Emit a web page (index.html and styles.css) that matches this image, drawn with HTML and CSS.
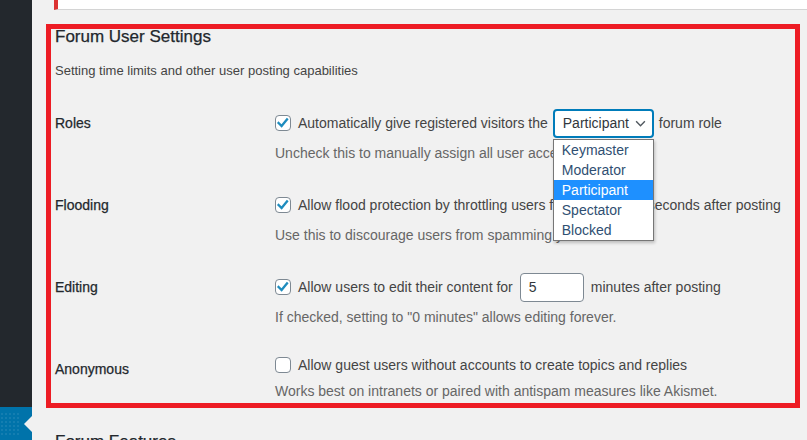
FILE: index.html
```html
<!DOCTYPE html>
<html lang="en">
<head>
<meta charset="utf-8">
<title>Forum User Settings</title>
<link rel="stylesheet" href="styles.css">
</head>
<body>
<div class="screen">
  <aside class="sidebar">
    <div class="sb-dark"></div>
    <div class="sb-current">
      <span class="sb-dots"></span>
      <span class="sb-arrow"></span>
    </div>
  </aside>
  <main class="main">
    <div class="notice"></div>
    <section class="annot">
      <h2 class="title">Forum User Settings</h2>
      <p class="intro">Setting time limits and other user posting capabilities</p>
      <div class="table">
        <div class="row">
          <div class="label">Roles</div>
          <div class="field">
            <div class="control">
              <span class="cb"><svg viewBox="0 0 16 16" width="16" height="16"><polyline points="3.6,8 6.6,11 12,4.4" /></svg></span>
              <span>Automatically give registered visitors the</span>
              <span class="select-wrap">
                <span class="select">Participant<svg class="chev" viewBox="0 0 12 8" width="12" height="8"><polyline points="1,1.5 6,6.5 11,1.5" /></svg></span>
                <ul class="dropdown">
                  <li>Keymaster</li>
                  <li>Moderator</li>
                  <li class="active">Participant</li>
                  <li>Spectator</li>
                  <li>Blocked</li>
                </ul>
              </span>
              <span>forum role</span>
            </div>
            <p class="desc">Uncheck this to manually assign all user access to forums.</p>
          </div>
        </div>
        <div class="row">
          <div class="label">Flooding</div>
          <div class="field">
            <div class="control">
              <span class="cb"><svg viewBox="0 0 16 16" width="16" height="16"><polyline points="3.6,8 6.6,11 12,4.4" /></svg></span>
              <span>Allow flood protection by throttling users for</span>
              <span class="num num-wide">10</span>
              <span>seconds after posting</span>
            </div>
            <p class="desc">Use this to discourage users from spamming your forums.</p>
          </div>
        </div>
        <div class="row">
          <div class="label">Editing</div>
          <div class="field">
            <div class="control">
              <span class="cb"><svg viewBox="0 0 16 16" width="16" height="16"><polyline points="3.6,8 6.6,11 12,4.4" /></svg></span>
              <span>Allow users to edit their content for</span>
              <span class="num">5</span>
              <span>minutes after posting</span>
            </div>
            <p class="desc">If checked, setting to "0 minutes" allows editing forever.</p>
          </div>
        </div>
        <div class="row row-last">
          <div class="label">Anonymous</div>
          <div class="field">
            <div class="control control-short">
              <span class="cb"></span>
              <span>Allow guest users without accounts to create topics and replies</span>
            </div>
            <p class="desc">Works best on intranets or paired with antispam measures like Akismet.</p>
          </div>
        </div>
      </div>
    </section>
    <h2 class="title next">Forum Features</h2>
  </main>
</div>
</body>
</html>
```

FILE: styles.css
```css
* { box-sizing: border-box; }

html, body {
  margin: 0;
  padding: 0;
  height: 440px;
  overflow: hidden;
}

body {
  font-family: "Liberation Sans", Arial, sans-serif;
  font-size: 14px;
  color: #444;
  background: #f1f1f1;
}

.screen {
  display: flex;
  height: 440px;
}

/* sidebar */
.sidebar {
  width: 32px;
  flex: 0 0 32px;
  display: flex;
  flex-direction: column;
}
.sb-dark {
  flex: 1;
  background: #23282d;
}
.sb-current {
  height: 33px;
  background: #0073aa;
  display: flex;
  align-items: center;
  justify-content: space-between;
}
.sb-dots {
  width: 20px;
  height: 24px;
  background-image: radial-gradient(circle, rgba(255,255,255,0.08) 0.8px, transparent 1.2px);
  background-size: 4px 4px;
}
.sb-arrow {
  width: 0;
  height: 0;
  border-top: 8px solid transparent;
  border-bottom: 8px solid transparent;
  border-right: 8px solid #f1f1f1;
}

/* main */
.main {
  flex: 1;
  padding-left: 14px;
  min-width: 0;
}

.notice {
  height: 10px;
  margin-left: 8px;
  background: #fff;
  border-left: 4px solid #dc3232;
  border-bottom: 1px solid #d4d4d4;
}

.annot {
  margin-top: 14px;
  width: 754px;
  border: 5px solid #ed1c24;
  padding: 0 0 0 4px;
}

.title {
  margin: 0;
  font-size: 17px;
  line-height: 16px;
  font-weight: 400;
  color: #23282d;
  -webkit-text-stroke: 0.25px #23282d;
}
.title.next {
  margin-top: 26px;
  margin-left: 9px;
}

.intro {
  margin: 17px 0 0;
  font-size: 13px;
  line-height: 18px;
  color: #444;
}

.table {
  margin-top: 14px;
}

.row {
  display: grid;
  grid-template-columns: 220px 1fr;
  padding: 14px 0;
}
.row-last {
  padding-bottom: 3px;
}

.label {
  padding-top: 6px;
  line-height: 18px;
  color: #23282d;
  -webkit-text-stroke: 0.25px #23282d;
}

.control {
  display: flex;
  align-items: center;
  height: 30px;
  white-space: nowrap;
  line-height: 18px;
}
.control-short {
  height: 22px;
}

.cb {
  width: 16px;
  height: 16px;
  flex: 0 0 16px;
  border: 1px solid #7e8993;
  border-radius: 4px;
  background: #fff;
  margin-right: 7px;
  position: relative;
  display: flex;
  align-items: center;
  justify-content: center;
}
.cb svg {
  position: absolute;
  left: -1px;
  top: -1px;
}
.cb polyline {
  fill: none;
  stroke: #1e8cbe;
  stroke-width: 2.3;
  stroke-linecap: square;
  stroke-linejoin: miter;
}

.select-wrap {
  position: relative;
  margin: 0 5px 0 5px;
  height: 29px;
  z-index: 5;
}
.select {
  display: flex;
  align-items: center;
  justify-content: space-between;
  width: 101px;
  height: 29px;
  padding: 0 6px 0 8px;
  border: 2px solid #007cba;
  border-radius: 4px;
  background: #fff;
  color: #32373c;
}
.chev {
  width: 11px;
  height: 7px;
}
.chev polyline {
  fill: none;
  stroke: #50575e;
  stroke-width: 1.6;
}

.dropdown {
  position: absolute;
  left: 0;
  top: 30px;
  width: 101px;
  margin: 0;
  padding: 0;
  list-style: none;
  background: #fff;
  border: 1px solid #767676;
  box-shadow: 1px 2px 3px rgba(0, 0, 0, 0.22);
}
.dropdown li {
  height: 20px;
  line-height: 20px;
  padding-left: 8px;
  color: #2f4f72;
}
.dropdown li.active {
  background: #1e90ff;
  color: #fff;
}

.num {
  width: 64px;
  height: 29px;
  margin: 0 7px;
  padding: 0 8px;
  border: 1px solid #7e8993;
  border-radius: 4px;
  background: #fff;
  color: #32373c;
  line-height: 27px;
}
.num-wide {
  width: 68px;
}

.desc {
  margin: 6px 0 0;
  line-height: 18px;
  color: #666;
}
```
